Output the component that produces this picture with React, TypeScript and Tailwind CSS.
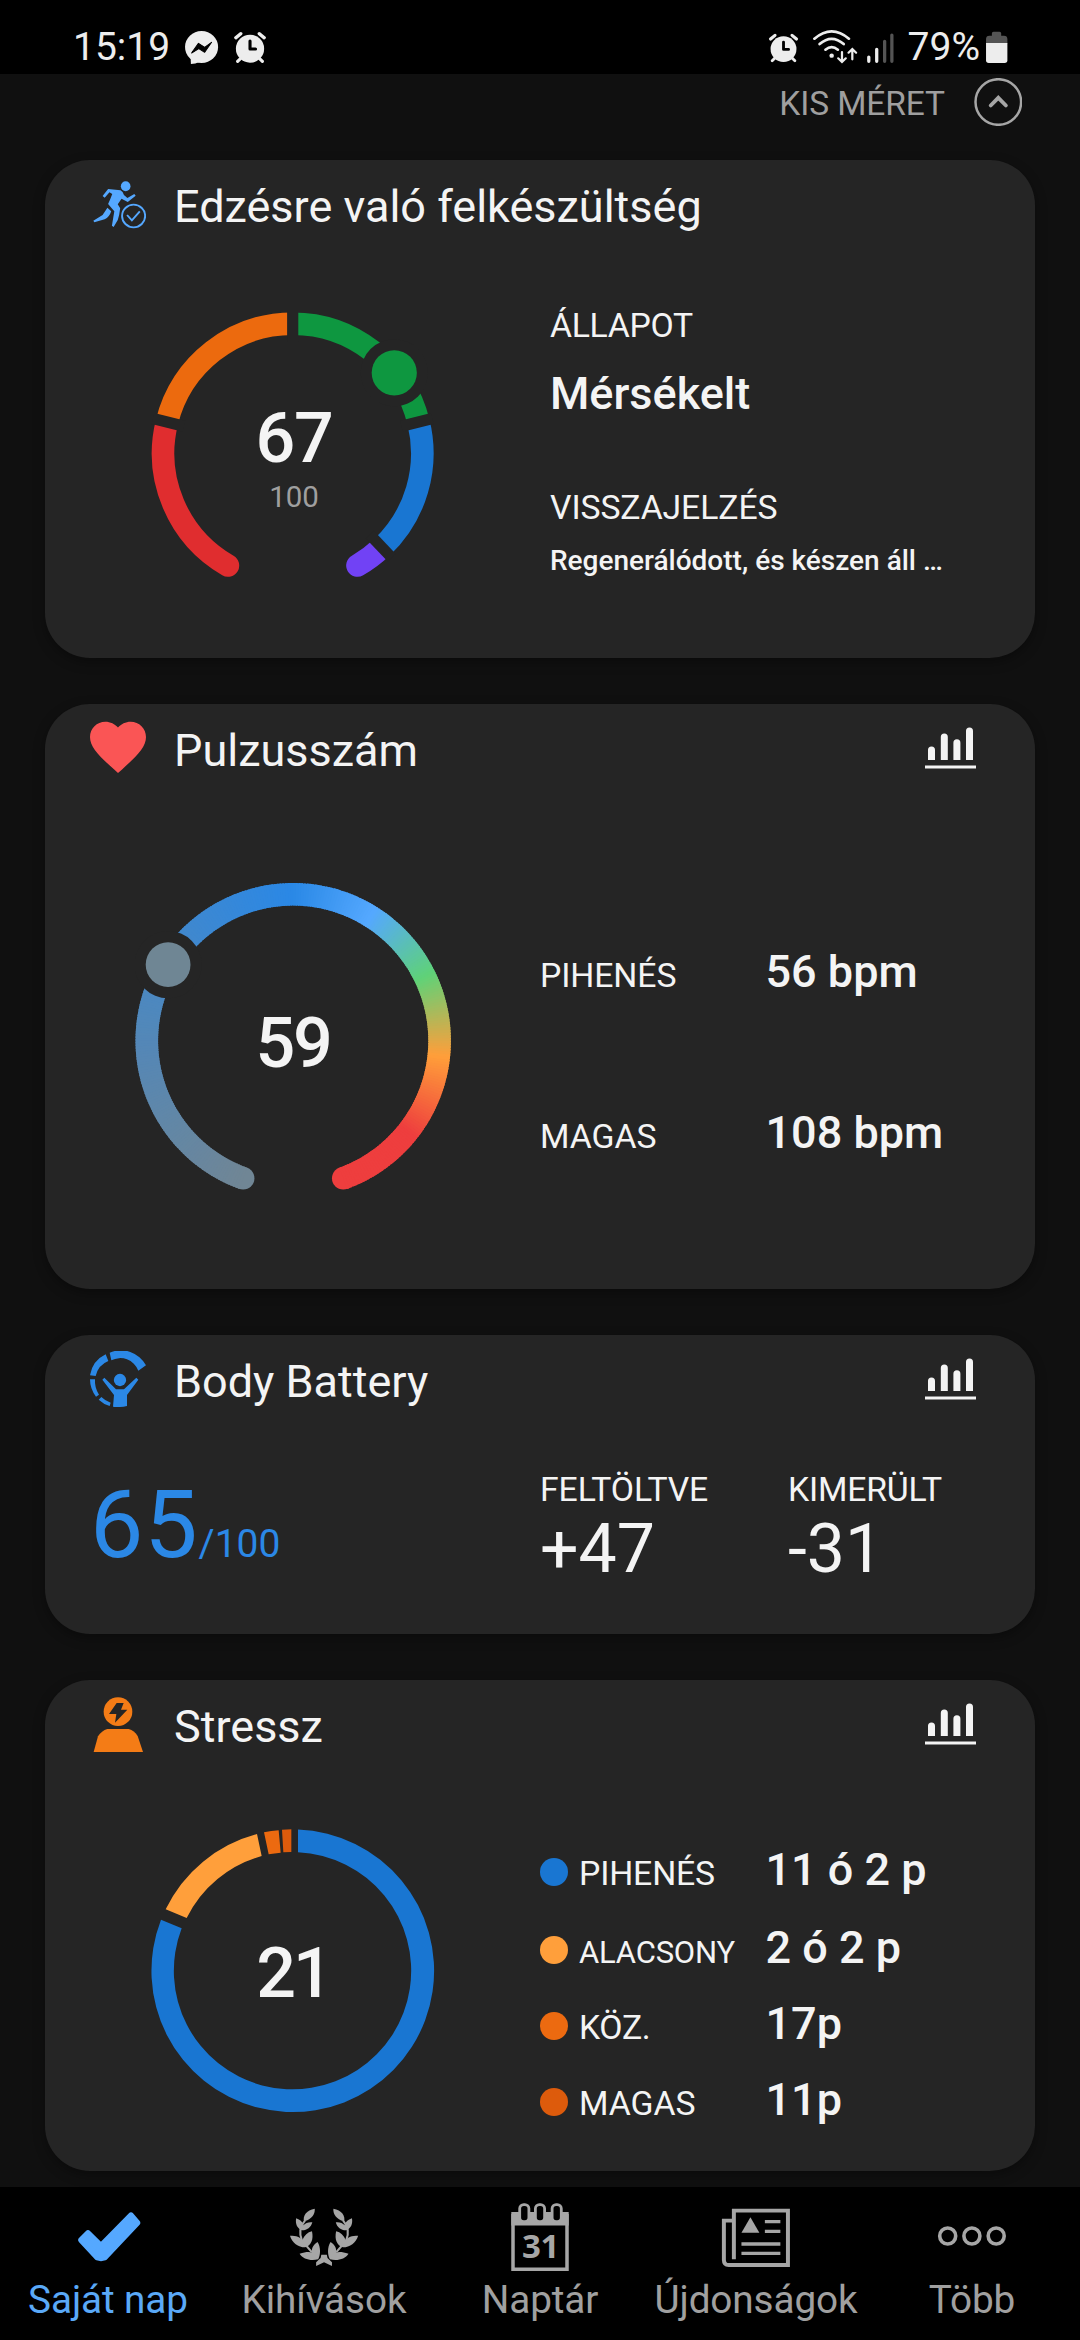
import type { ReactNode } from "react";
import { MdFavorite } from "react-icons/md";

type Point = { x: number; y: number };

function polar(cx: number, cy: number, r: number, deg: number): Point {
  const a = (deg * Math.PI) / 180;
  return { x: cx + r * Math.sin(a), y: cy - r * Math.cos(a) };
}

function arc(cx: number, cy: number, r: number, from: number, to: number) {
  const s = polar(cx, cy, r, from);
  const e = polar(cx, cy, r, to);
  const large = to - from > 180 ? 1 : 0;
  return `M${s.x} ${s.y}A${r} ${r} 0 ${large} 1 ${e.x} ${e.y}`;
}

/* ---------- status bar ---------- */

function AlarmIcon({ className }: { className: string }) {
  return (
    <svg className={className} viewBox="673.7 90 104.5 108" preserveAspectRatio="none" fill="none">
      <ellipse cx="726" cy="146" rx="41" ry="42" fill="#ededed" />
      <path d="M685 113L699 101M767 113L753 101" stroke="#ededed" strokeWidth="10" strokeLinecap="round" />
      <path d="M690 184L699 175M762 184L753 175" stroke="#ededed" strokeWidth="9" strokeLinecap="round" />
      <path d="M726 123V147H742" stroke="#000" strokeWidth="9" strokeLinecap="round" strokeLinejoin="round" />
    </svg>
  );
}

function StatusBar() {
  return (
    <header className="flex h-[74px] shrink-0 items-center justify-between bg-black pt-[22px] pr-[72px] pl-[73px] text-[39px] text-[#ededed]">
      <div className="flex items-center">
        <span className="pb-[3px] leading-[46px]">15:19</span>
        <svg className="ml-[14px] size-9" viewBox="534 90 104.5 108" preserveAspectRatio="none">
          <ellipse cx="585" cy="141" rx="48" ry="48" fill="#ededed" />
          <path d="M553 165L554 192Q568 192 578 186Z" fill="#ededed" />
          <path d="M556 159L576 130L594 142L614 127L594 157L577 146Z" fill="#000" stroke="#000" strokeWidth="3" strokeLinejoin="round" />
        </svg>
        <AlarmIcon className="ml-3 size-9" />
      </div>
      <div className="flex items-center">
        <AlarmIcon className="size-[33px]" />
        <svg className="ml-[11px] h-[38px] w-12" viewBox="784 87 139.4 114" preserveAspectRatio="none" fill="none" stroke="#ededed" strokeLinecap="round">
          <path d="M794 116Q844 72 894 116" strokeWidth="8" />
          <path d="M809 132Q844 101 879 132" strokeWidth="8" />
          <path d="M826 149Q844 134 862 149" strokeWidth="8" />
          <circle cx="844" cy="167" r="6.5" fill="#ededed" stroke="none" />
          <path d="M874 156V184M863 175L874 186L885 175" strokeWidth="6.5" />
          <path d="M904 178V148M893 158L904 147L915 158" strokeWidth="6.5" />
        </svg>
        <svg className="ml-[6px] h-[33px] w-[31px]" viewBox="941 92 90 99" preserveAspectRatio="none" fill="none" strokeWidth="9.5" strokeLinecap="round">
          <path d="M952 167V180M975 144V180" stroke="#ededed" />
          <path d="M998 120V180M1019 101V180" stroke="#545454" />
        </svg>
        <span className="ml-3 pb-[3px] leading-[46px]">79%</span>
        <svg className="ml-[5px] h-[34px] w-[23px]" viewBox="1292 92 66.8 102" preserveAspectRatio="none">
          <path d="M1312 99Q1312 94 1317 94H1334Q1339 94 1339 99V106H1347Q1357 106 1357 116V130H1295V116Q1295 106 1305 106H1312Z" fill="#545454" />
          <path d="M1295 128H1357V180Q1357 188 1349 188H1303Q1295 188 1295 180Z" fill="#ededed" />
        </svg>
      </div>
    </header>
  );
}

/* ---------- card icons ---------- */

function RunnerIcon() {
  return (
    <svg className="size-14" viewBox="261.4 528 162.6 168" preserveAspectRatio="none" fill="#55a8ff">
      <ellipse cx="365" cy="559" rx="14" ry="15" />
      <path d="M298 588L314 567L350 571Q357 575 360 585L370 594L390 582L394 587L371 606L353 596L342 613L349 625Q347 645 342 660L330 681L325 677L332 634L314 612Q320 599 326 582L318 577L304 593Z" />
      <path d="M312 623L323 634Q318 651 304 658L274 667L271 662L298 645Z" />
      <ellipse cx="388" cy="648" rx="33.5" ry="34" fill="none" stroke="#55a8ff" strokeWidth="5.5" />
      <path d="M369 645L383 661L406 634" fill="none" stroke="#55a8ff" strokeWidth="5.5" />
    </svg>
  );
}

function BodyBatteryIcon() {
  return (
    <svg className="size-14" viewBox="150 93 168 168" fill="#2b88e6">
      <path d="M209 98A85 85 0 0 1 318 136L295 152A59 62 0 0 0 214 121Z" />
      <path d="M150 166A85 85 0 0 1 197 103L205 123A62 64 0 0 0 167 168Z" />
      <path d="M150 178A85 85 0 0 0 168 230L177 224A74 74 0 0 1 165 178Z" />
      <path d="M176 239A85 85 0 0 0 209 258L212 248A74 74 0 0 1 184 231Z" />
      <circle cx="240" cy="180" r="18.5" />
      <path d="M193 173L228 208H252L289 173L295 179L261 225V258Q240 263 219 260L222 225L187 179Z" />
    </svg>
  );
}

function StressIcon() {
  return (
    <svg className="size-14" viewBox="150 108 168 168" fill="#f47c16">
      <circle cx="234" cy="155" r="43" />
      <path d="M230 129H251L243 149H262L225 188L229 162H207Z" fill="#252525" />
      <path d="M161 276L174 229Q185 212 202 207H266Q283 212 293 228L309 276Z" />
    </svg>
  );
}

function ChartIcon() {
  return (
    <svg className="h-[42px] w-[51px]" viewBox="0 0 51 42">
      <path d="M3 33V23a3.5 3.5 0 0 1 7 0V33ZM15.8 33V10a3.5 3.5 0 0 1 7 0V33ZM28.4 33V15.700a3.5 3.5 0 0 1 7 0V33ZM41 33V4a3.5 3.5 0 0 1 7 0V33Z" fill="#f4f4f4" />
      <rect x="0" y="38.500" width="51" height="3" fill="#f4f4f4" />
    </svg>
  );
}

/* ---------- cards ---------- */

function Card({ icon, title, chart, className, children }: { icon: ReactNode; title: string; chart?: boolean; className: string; children: ReactNode }) {
  return (
    <section className={`w-[990px] shrink-0 rounded-[45px] bg-[#252525] pt-4 shadow-[0_4px_12px_rgba(0,0,0,0.35)] ${className}`}>
      <div className="flex h-14 items-center pr-[59px] pl-[45px]">
        {icon}
        <h2 className="ml-7 flex-1 pt-[5px] text-[45px] leading-[52px]">{title}</h2>
        {chart && <ChartIcon />}
      </div>
      {children}
    </section>
  );
}

function ReadinessGauge() {
  const cx = 141.7;
  const cy = 142.3;
  const r = 129.6;
  const knob = polar(cx, cy, r, 51.6);
  const gaps = [-76, 0, 76, 136.5];
  return (
    <svg className="col-start-1 row-start-1 size-[284px]" viewBox="0 0 284 284" fill="none" strokeWidth="22.6">
      <path d={arc(cx, cy, r, -150, -76)} stroke="#e02d2f" strokeLinecap="round" />
      <path d={arc(cx, cy, r, 136.5, 150)} stroke="#7142f5" strokeLinecap="round" />
      <path d={arc(cx, cy, r, -76, 0)} stroke="#ec6a0e" />
      <path d={arc(cx, cy, r, 0, 76)} stroke="#0e9740" />
      <path d={arc(cx, cy, r, 76, 136.5)} stroke="#1976d2" />
      {gaps.map((g) => {
        const a = polar(cx, cy, 112, g);
        const b = polar(cx, cy, 144, g);
        return <path key={g} d={`M${a.x} ${a.y}L${b.x} ${b.y}`} stroke="#252525" strokeWidth="11.2" />;
      })}
      <circle cx={knob.x} cy={knob.y} r="33.6" fill="#252525" stroke="none" />
      <circle cx={knob.x} cy={knob.y} r="22.6" fill="#0e9740" stroke="none" />
    </svg>
  );
}

const heartStops: [number, number[]][] = [
  [-160, [112, 134, 149]],
  [-64, [73, 136, 196]],
  [0, [42, 136, 230]],
  [32, [85, 168, 255]],
  [64, [95, 210, 120]],
  [96, [255, 158, 58]],
  [128, [238, 62, 62]],
  [160, [238, 62, 62]],
];

function heartColor(deg: number) {
  const i = Math.max(1, heartStops.findIndex(([d]) => d >= deg));
  const [d0, c0] = heartStops[i - 1];
  const [d1, c1] = heartStops[i];
  const t = (deg - d0) / (d1 - d0);
  return `rgb(${c0.map((v, k) => Math.round(v + (c1[k] - v) * t)).join(",")})`;
}

function HeartGauge() {
  const cx = 158.2;
  const cy = 157.7;
  const r = 146.4;
  const knob = polar(cx, cy, r, -58.7);
  const start = polar(cx, cy, r, -160);
  const end = polar(cx, cy, r, 160);
  const slices = Array.from({ length: 320 }, (_, i) => -160 + i);
  return (
    <svg className="col-start-1 row-start-1 size-[316px]" viewBox="0 0 316 316" fill="none" strokeWidth="22.6">
      <circle cx={start.x} cy={start.y} r="11.3" fill={heartColor(-160)} stroke="none" />
      <circle cx={end.x} cy={end.y} r="11.3" fill={heartColor(160)} stroke="none" />
      {slices.map((d) => (
        <path key={d} d={arc(cx, cy, r, d, Math.min(160, d + 1.6))} stroke={heartColor(d + 0.5)} />
      ))}
      <circle cx={knob.x} cy={knob.y} r="33.6" fill="#252525" stroke="none" />
      <circle cx={knob.x} cy={knob.y} r="22.4" fill="#6f8694" stroke="none" />
    </svg>
  );
}

function StressDonut() {
  return (
    <svg className="col-start-1 row-start-1 size-[284px]" viewBox="333 507 852 852">
      <path d="M774 508.500A424 424 0 1 1 363 779L425 805A356 356 0 1 0 774 576.500Z" fill="#1976d2" />
      <path d="M377 748A424 424 0 0 1 651 522L665 588A356 356 0 0 0 440 774Z" fill="#ff9f3b" />
      <path d="M672 517A424 424 0 0 1 716 511L722 578A356 356 0 0 0 686 583Z" fill="#ec6a10" />
      <path d="M726 509.500A424 424 0 0 1 754 508V576A356 356 0 0 0 730 577Z" fill="#dd5b0c" />
    </svg>
  );
}

const stressRows = [
  { label: "PIHENÉS", value: "11 ó 2 p", dot: "bg-[#1976d2]", size: "text-[33.75px] tracking-[-0.15px]", row: "mb-[26px]" },
  { label: "ALACSONY", value: "2 ó 2 p", dot: "bg-[#ff9f3b]", size: "text-[31px] tracking-[-0.2px]", row: "mb-6" },
  { label: "KÖZ.", value: "17p", dot: "bg-[#ec6a10]", size: "text-[33.75px] tracking-[-0.3px]", row: "mb-6" },
  { label: "MAGAS", value: "11p", dot: "bg-[#dd5b0c]", size: "text-[33.75px]", row: "" },
];

/* ---------- bottom navigation ---------- */

const laurelHalf = (
  <>
    <path d="M914 146C890 150 878 168 883 184C906 177 915 162 914 146Z" />
    <path d="M860 175C874 180 880 188 881 196C888 188 896 186 907 187C903 203 890 212 876 211C863 205 857 192 860 175Z" />
    <path d="M842 227C860 227 873 231 878 240C884 226 893 217 906 214C911 238 904 257 886 262C866 262 848 248 842 227Z" />
    <path d="M870 281C886 276 898 274 906 278C904 264 911 253 922 246C932 262 931 285 924 298C900 303 880 297 870 281Z" />
    <path d="M886 181C870 200 868 220 877 242L906 277" fill="none" stroke="#a6a6a6" strokeWidth="6" />
  </>
);

function NavIcon({ viewBox, children }: { viewBox: string; children: ReactNode }) {
  return (
    <svg className="h-[90px] w-20" viewBox={viewBox} preserveAspectRatio="none">
      {children}
    </svg>
  );
}

const navItems = [
  {
    label: "Saját nap",
    color: "text-[#5aa9f8]",
    icon: (
      <NavIcon viewBox="0 0 80 90">
        <path d="M13.500 53L20 46.500L33 59.200L63 28.800L69 35.800L36.500 70.300Q33 71.500 29.500 70.300Z" fill="#55a8ff" stroke="#55a8ff" strokeWidth="6.500" strokeLinejoin="round" />
      </NavIcon>
    ),
  },
  {
    label: "Kihívások",
    color: "text-[#a0a0a0]",
    icon: (
      <NavIcon viewBox="824.700 81 232.300 270">
        <g fill="#a6a6a6">
          {laurelHalf}
          <g transform="translate(1882 0) scale(-1 1)">{laurelHalf}</g>
          <path d="M933 284H949L951 294L964 307V318L941 307L918 318V307L931 294Z" />
        </g>
      </NavIcon>
    ),
  },
  {
    label: "Naptár",
    color: "text-[#a0a0a0]",
    icon: (
      <NavIcon viewBox="0 0 80 90">
        <path d="M13 27V82.200H67V27" fill="none" stroke="#a6a6a6" strokeWidth="3.500" />
        <rect x="11.300" y="25" width="57.400" height="13.500" fill="#a6a6a6" />
        {[24.3, 40, 56.7].map((x) => (
          <rect key={x} x={x - 4.600} y="17.600" width="9.200" height="17" rx="4" fill="#000" stroke="#a6a6a6" strokeWidth="2.800" />
        ))}
        <text x="40.500" y="70.700" textAnchor="middle" fontFamily="Noto Sans, sans-serif" fontWeight="700" fontSize="33" letterSpacing="-0.500" fill="#a6a6a6">
          31
        </text>
      </NavIcon>
    ),
  },
  {
    label: "Újdonságok",
    color: "text-[#a0a0a0]",
    icon: (
      <NavIcon viewBox="511.100 81 232.300 270">
        <path d="M563 298V152H720V315H548Q534 315 534 300V182H563" fill="none" stroke="#a6a6a6" strokeWidth="11.500" />
        <path d="M611 172L637 218H585Z" fill="#a6a6a6" />
        <path d="M653 185H698M653 214H698M585 252H698M585 280H698" stroke="#a6a6a6" strokeWidth="10" />
      </NavIcon>
    ),
  },
  {
    label: "Több",
    color: "text-[#a0a0a0]",
    icon: (
      <NavIcon viewBox="0 0 80 90">
        {[15.7, 39.9, 64.2].map((x) => (
          <circle key={x} cx={x} cy="49" r="8" fill="none" stroke="#a6a6a6" strokeWidth="3.600" />
        ))}
      </NavIcon>
    ),
  },
];

export default function App() {
  return (
    <div className="flex h-[2340px] w-[1080px] flex-col overflow-hidden bg-[#101010] font-['Roboto',sans-serif] text-[#f4f4f4]">
      <StatusBar />

      <div className="flex h-[86px] shrink-0 items-start justify-end pt-1 pr-[58px]">
        <span className="pt-[5px] text-[33.5px] leading-[42px] tracking-[-0.1px] text-[#9f9f9f]">KIS MÉRET</span>
        <svg className="ml-[29px] size-12" viewBox="0 0 48 48" fill="none" stroke="#a6a6a6">
          <circle cx="24.300" cy="24" r="22.800" strokeWidth="2.500" />
          <path d="M16.700 27.500L24.300 19.800L31.900 27.500" strokeWidth="3.800" strokeLinecap="round" />
        </svg>
      </div>

      <main className="flex flex-1 flex-col items-center gap-[46px]">
        <Card className="h-[498px]" icon={<RunnerIcon />} title="Edzésre való felkészültség">
          <div className="flex">
            <div className="w-[505px] pt-[79px] pl-[106px]">
              <div className="grid size-[284px]">
                <ReadinessGauge />
                <div className="col-start-1 row-start-1 flex flex-col items-center pt-[92px] pl-[2px]">
                  <span className="text-[70px] leading-[70px] font-medium tracking-[-1.4px]">67</span>
                  <span className="mt-[6px] text-[29.5px] leading-9 text-[#9f9f9f]">100</span>
                </div>
              </div>
            </div>
            <div className="flex flex-col pt-[73.5px]">
              <span className="text-[33.75px] leading-10 tracking-[-0.3px]">ÁLLAPOT</span>
              <span className="mt-[22px] text-[45px] leading-[52px] font-medium">Mérsékelt</span>
              <span className="mt-[68px] text-[33.75px] leading-10 tracking-[-0.1px]">VISSZAJELZÉS</span>
              <span className="mt-[16.5px] text-[28px] leading-[34px] font-medium">Regenerálódott, és készen áll …</span>
            </div>
          </div>
        </Card>

        <Card className="h-[585px]" icon={<MdFavorite className="size-14 text-[#fa5555]" viewBox="2 2.4 20 20" />} title="Pulzusszám" chart>
          <div className="flex">
            <div className="w-[495px] pt-[107px] pl-[90px]">
              <div className="grid size-[316px]">
                <HeartGauge />
                <span className="col-start-1 row-start-1 pt-[125px] text-center text-[70px] leading-[70px] font-medium tracking-[-2.4px]">59</span>
              </div>
            </div>
            <div className="flex flex-col gap-[108.5px] pt-[170px]">
              <div className="flex h-[52px] items-baseline">
                <span className="w-[225.5px] text-[33.75px] tracking-[-0.1px]">PIHENÉS</span>
                <span className="text-[45px] leading-[52px] font-medium">56 bpm</span>
              </div>
              <div className="flex h-[52px] items-baseline">
                <span className="w-[225.5px] text-[33.75px]">MAGAS</span>
                <span className="text-[45px] leading-[52px] font-medium">108 bpm</span>
              </div>
            </div>
          </div>
        </Card>

        <Card className="h-[299px]" icon={<BodyBatteryIcon />} title="Body Battery" chart>
          <div className="flex">
            <div className="flex w-[495px] items-baseline pt-[68px] pl-[45px] text-[#2b88e6]">
              <span className="text-[95px] leading-[100px] tracking-[0.9px]">65</span>
              <span className="text-[39px]">/100</span>
            </div>
            <div className="flex w-[248px] flex-col pt-[62.5px]">
              <span className="text-[33.75px] leading-10 tracking-[-0.1px]">FELTÖLTVE</span>
              <span className="mt-[5px] text-[68px] leading-[68px]">+47</span>
            </div>
            <div className="flex flex-col pt-[62.5px]">
              <span className="text-[33.75px] leading-10 tracking-[-0.2px]">KIMERÜLT</span>
              <span className="mt-[5px] text-[68px] leading-[68px]">-31</span>
            </div>
          </div>
        </Card>

        <Card className="h-[491px]" icon={<StressIcon />} title="Stressz" chart>
          <div className="flex">
            <div className="w-[495px] pt-[77px] pl-[106px]">
              <div className="grid size-[284px]">
                <StressDonut />
                <span className="col-start-1 row-start-1 pt-[109px] text-center text-[70px] leading-[70px] font-medium tracking-[-3px]">21</span>
              </div>
            </div>
            <div className="flex flex-col pt-[91.5px]">
              {stressRows.map((r) => (
                <div key={r.label} className={`flex h-[52px] items-baseline ${r.row}`}>
                  <span className={`mt-[5px] size-7 self-center rounded-full ${r.dot}`} />
                  <span className={`ml-[11px] w-[186.5px] ${r.size}`}>{r.label}</span>
                  <span className="text-[45px] leading-[52px] font-medium">{r.value}</span>
                </div>
              ))}
            </div>
          </div>
        </Card>
      </main>

      <nav className="grid h-[153px] shrink-0 grid-cols-5 bg-black">
        {navItems.map((item) => (
          <div key={item.label} className={`flex flex-col items-center ${item.color}`}>
            {item.icon}
            <span className="text-[38.7px] leading-[46px] tracking-[-0.1px]">{item.label}</span>
          </div>
        ))}
      </nav>
    </div>
  );
}
